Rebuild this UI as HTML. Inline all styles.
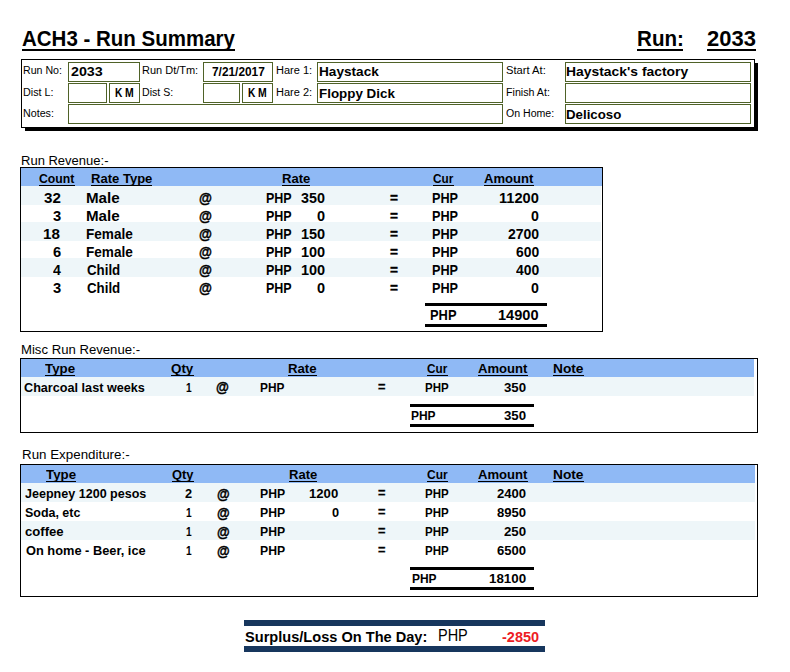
<!DOCTYPE html>
<html><head><meta charset="utf-8"><title>ACH3 - Run Summary</title>
<style>
html,body{margin:0;padding:0;background:#fff;}
body{width:790px;height:672px;position:relative;overflow:hidden;font-family:"Liberation Sans",sans-serif;}
.r{position:absolute;box-sizing:content-box;}
.t{position:absolute;white-space:pre;font-weight:700;color:#000;transform-origin:0 0;font-family:"Liberation Sans",sans-serif;}
</style></head><body>
<div class="r" style="left:22px;top:49px;width:213px;height:2px;background:#000;"></div>
<div class="r" style="left:637px;top:49px;width:46px;height:2px;background:#000;"></div>
<div class="r" style="left:707px;top:49px;width:49px;height:2px;background:#000;"></div>
<div class="r" style="left:25px;top:128px;width:733px;height:3px;background:#000;"></div>
<div class="r" style="left:755px;top:63px;width:3px;height:68px;background:#000;"></div>
<div class="r" style="left:21px;top:59px;width:732px;height:67px;border:1px solid #000;background:#fff;"></div>
<div class="r" style="left:68px;top:62px;width:70px;height:18px;border:1px solid #4f6228;background:#fff;"></div>
<div class="r" style="left:68px;top:83px;width:37px;height:18px;border:1px solid #4f6228;background:#fff;"></div>
<div class="r" style="left:109px;top:83px;width:29px;height:18px;border:1px solid #4f6228;background:#fff;"></div>
<div class="r" style="left:68px;top:104px;width:433px;height:18px;border:1px solid #4f6228;background:#fff;"></div>
<div class="r" style="left:203px;top:62px;width:68px;height:18px;border:1px solid #4f6228;background:#fff;"></div>
<div class="r" style="left:203px;top:83px;width:35px;height:18px;border:1px solid #4f6228;background:#fff;"></div>
<div class="r" style="left:242px;top:83px;width:29px;height:18px;border:1px solid #4f6228;background:#fff;"></div>
<div class="r" style="left:317px;top:62px;width:184px;height:18px;border:1px solid #4f6228;background:#fff;"></div>
<div class="r" style="left:317px;top:83px;width:184px;height:18px;border:1px solid #4f6228;background:#fff;"></div>
<div class="r" style="left:565px;top:62px;width:184px;height:18px;border:1px solid #4f6228;background:#fff;"></div>
<div class="r" style="left:565px;top:83px;width:184px;height:18px;border:1px solid #4f6228;background:#fff;"></div>
<div class="r" style="left:565px;top:104px;width:184px;height:18px;border:1px solid #4f6228;background:#fff;"></div>
<div class="r" style="left:20px;top:167px;width:581px;height:163px;border:1px solid #000;background:#fff;"></div>
<div class="r" style="left:21px;top:168px;width:581px;height:18px;background:#8fb9f5;"></div>
<div class="r" style="left:21px;top:186px;width:580px;height:19px;background:#eef6f9;"></div>
<div class="r" style="left:21px;top:222px;width:580px;height:19px;background:#eef6f9;"></div>
<div class="r" style="left:21px;top:258px;width:580px;height:19px;background:#eef6f9;"></div>
<div class="r" style="left:38.7px;top:184.5px;width:36.199999999999996px;height:1px;background:#000;"></div>
<div class="r" style="left:90.7px;top:184.5px;width:61.6px;height:1px;background:#000;"></div>
<div class="r" style="left:281.7px;top:184.5px;width:28.6px;height:1px;background:#000;"></div>
<div class="r" style="left:432.7px;top:184.5px;width:21.200000000000024px;height:1px;background:#000;"></div>
<div class="r" style="left:483.7px;top:184.5px;width:50.200000000000024px;height:1px;background:#000;"></div>
<div class="r" style="left:425px;top:303px;width:122px;height:3px;background:#000;"></div>
<div class="r" style="left:425px;top:324px;width:122px;height:3px;background:#000;"></div>
<div class="r" style="left:20px;top:358px;width:736px;height:73px;border:1px solid #000;background:#fff;"></div>
<div class="r" style="left:21px;top:359px;width:733px;height:18px;background:#8fb9f5;"></div>
<div class="r" style="left:21px;top:377px;width:733px;height:19px;background:#eef6f9;"></div>
<div class="r" style="left:44.7px;top:374.5px;width:30.6px;height:1px;background:#000;"></div>
<div class="r" style="left:170.7px;top:374.5px;width:23.000000000000007px;height:1px;background:#000;"></div>
<div class="r" style="left:287.7px;top:374.5px;width:28.99999999999998px;height:1px;background:#000;"></div>
<div class="r" style="left:426.7px;top:374.5px;width:21.200000000000024px;height:1px;background:#000;"></div>
<div class="r" style="left:477.7px;top:374.5px;width:50.200000000000024px;height:1px;background:#000;"></div>
<div class="r" style="left:553.0px;top:374.5px;width:30.700000000000024px;height:1px;background:#000;"></div>
<div class="r" style="left:410px;top:404px;width:124px;height:3px;background:#000;"></div>
<div class="r" style="left:410px;top:424px;width:124px;height:3px;background:#000;"></div>
<div class="r" style="left:20px;top:464px;width:736px;height:131px;border:1px solid #000;background:#fff;"></div>
<div class="r" style="left:21px;top:465px;width:734px;height:18px;background:#8fb9f5;"></div>
<div class="r" style="left:21px;top:483px;width:734px;height:19px;background:#eef6f9;"></div>
<div class="r" style="left:21px;top:521px;width:734px;height:19px;background:#eef6f9;"></div>
<div class="r" style="left:45.7px;top:480.5px;width:30.6px;height:1px;background:#000;"></div>
<div class="r" style="left:171.7px;top:480.5px;width:22.199999999999996px;height:1px;background:#000;"></div>
<div class="r" style="left:288.7px;top:480.5px;width:28.6px;height:1px;background:#000;"></div>
<div class="r" style="left:426.7px;top:480.5px;width:21.6px;height:1px;background:#000;"></div>
<div class="r" style="left:477.7px;top:480.5px;width:50.200000000000024px;height:1px;background:#000;"></div>
<div class="r" style="left:553.0px;top:480.5px;width:30.700000000000024px;height:1px;background:#000;"></div>
<div class="r" style="left:410px;top:567px;width:124px;height:3px;background:#000;"></div>
<div class="r" style="left:410px;top:587px;width:124px;height:3px;background:#000;"></div>
<div class="r" style="left:244px;top:620px;width:301px;height:5.6px;background:#17365d;"></div>
<div class="r" style="left:244px;top:646px;width:301px;height:5.6px;background:#17365d;"></div>
<span class="t" style="left:21.77px;top:26px;font-size:21.66px;line-height:25px;transform:scaleX(0.9461);">ACH3 - Run Summary</span>
<span class="t" style="left:637.29px;top:26px;font-size:21.66px;line-height:25px;transform:scaleX(0.9514);">Run:</span>
<span class="t" style="left:707.19px;top:26px;font-size:21.66px;line-height:25px;transform:scaleX(1.0139);">2033</span>
<span class="t" style="left:23.41px;top:63px;font-size:11.63px;line-height:13px;transform:scaleX(0.9132);font-weight:400;">Run No:</span>
<span class="t" style="left:23.42px;top:85px;font-size:11.63px;line-height:13px;transform:scaleX(0.9253);font-weight:400;">Dist L:</span>
<span class="t" style="left:23.41px;top:106px;font-size:11.63px;line-height:13px;transform:scaleX(0.9208);font-weight:400;">Notes:</span>
<span class="t" style="left:142.34px;top:63px;font-size:11.63px;line-height:13px;transform:scaleX(0.9453);font-weight:400;">Run Dt/Tm:</span>
<span class="t" style="left:142.49px;top:85px;font-size:11.63px;line-height:13px;transform:scaleX(0.9095);font-weight:400;">Dist S:</span>
<span class="t" style="left:276.35px;top:63px;font-size:11.63px;line-height:13px;transform:scaleX(0.9464);font-weight:400;">Hare 1:</span>
<span class="t" style="left:276.35px;top:85px;font-size:11.63px;line-height:13px;transform:scaleX(0.9464);font-weight:400;">Hare 2:</span>
<span class="t" style="left:505.82px;top:63px;font-size:11.63px;line-height:13px;transform:scaleX(0.9624);font-weight:400;">Start At:</span>
<span class="t" style="left:506.14px;top:85px;font-size:11.63px;line-height:13px;transform:scaleX(0.9189);font-weight:400;">Finish At:</span>
<span class="t" style="left:506.22px;top:106px;font-size:11.63px;line-height:13px;transform:scaleX(0.9097);font-weight:400;">On Home:</span>
<span class="t" style="left:71.00px;top:64px;font-size:13.37px;line-height:15px;transform:scaleX(1.0680);">2033</span>
<span class="t" style="left:319.38px;top:64px;font-size:13.37px;line-height:15px;transform:scaleX(1.0199);">Haystack</span>
<span class="t" style="left:319.34px;top:86px;font-size:13.37px;line-height:15px;transform:scaleX(1.0017);">Floppy Dick</span>
<span class="t" style="left:566.01px;top:64px;font-size:13.37px;line-height:15px;transform:scaleX(1.0395);">Haystack's factory</span>
<span class="t" style="left:566.14px;top:107px;font-size:13.37px;line-height:15px;transform:scaleX(0.9924);">Delicoso</span>
<span class="t" style="left:211.60px;top:65px;font-size:12.20px;line-height:14px;transform:scaleX(0.9735);">7/21/2017</span>
<span class="t" style="left:115.28px;top:86px;font-size:12.00px;line-height:14px;transform:scaleX(0.8469);">K</span>
<span class="t" style="left:124.90px;top:86px;font-size:12.00px;line-height:14px;transform:scaleX(0.8700);">M</span>
<span class="t" style="left:248.28px;top:86px;font-size:12.00px;line-height:14px;transform:scaleX(0.8469);">K</span>
<span class="t" style="left:257.90px;top:86px;font-size:12.00px;line-height:14px;transform:scaleX(0.8700);">M</span>
<span class="t" style="left:21.21px;top:154px;font-size:11.92px;line-height:14px;transform:scaleX(1.0924);font-weight:400;">Run Revenue:-</span>
<span class="t" style="left:20.77px;top:343px;font-size:11.92px;line-height:14px;transform:scaleX(1.1035);font-weight:400;">Misc Run Revenue:-</span>
<span class="t" style="left:22.21px;top:448px;font-size:11.92px;line-height:14px;transform:scaleX(1.1214);font-weight:400;">Run Expenditure:-</span>
<span class="t" style="left:39.00px;top:171px;font-size:13.37px;line-height:15px;transform:scaleX(0.9162);">Count</span>
<span class="t" style="left:90.69px;top:171px;font-size:13.37px;line-height:15px;transform:scaleX(0.9764);">Rate Type</span>
<span class="t" style="left:281.69px;top:171px;font-size:13.37px;line-height:15px;transform:scaleX(0.9799);">Rate</span>
<span class="t" style="left:433.00px;top:171px;font-size:13.37px;line-height:15px;transform:scaleX(0.8804);">Cur</span>
<span class="t" style="left:484.00px;top:171px;font-size:13.37px;line-height:15px;transform:scaleX(0.9773);">Amount</span>
<span class="t" style="left:44.14px;top:190px;font-size:13.95px;line-height:16px;transform:scaleX(1.0859);">32</span>
<span class="t" style="left:85.88px;top:190px;font-size:13.95px;line-height:16px;transform:scaleX(1.0874);">Male</span>
<span class="t" style="left:198.74px;top:190px;font-size:14.65px;line-height:16px;transform:scaleX(0.9054);-webkit-text-stroke:0.45px #000;">@</span>
<span class="t" style="left:265.61px;top:190px;font-size:13.95px;line-height:16px;transform:scaleX(0.8971);">PHP</span>
<span class="t" style="left:301.30px;top:190px;font-size:13.95px;line-height:16px;transform:scaleX(1.0277);">350</span>
<span class="t" style="left:390.00px;top:190px;font-size:13.95px;line-height:16px;transform:scaleX(0.9801);-webkit-text-stroke:0.3px #000;">=</span>
<span class="t" style="left:432.20px;top:190px;font-size:13.95px;line-height:16px;transform:scaleX(0.9097);">PHP</span>
<span class="t" style="left:499.24px;top:190px;font-size:13.95px;line-height:16px;transform:scaleX(1.0484);">11200</span>
<span class="t" style="left:52.59px;top:208px;font-size:13.95px;line-height:16px;transform:scaleX(1.0574);">3</span>
<span class="t" style="left:85.88px;top:208px;font-size:13.95px;line-height:16px;transform:scaleX(1.0874);">Male</span>
<span class="t" style="left:198.74px;top:208px;font-size:14.65px;line-height:16px;transform:scaleX(0.9054);-webkit-text-stroke:0.45px #000;">@</span>
<span class="t" style="left:265.61px;top:208px;font-size:13.95px;line-height:16px;transform:scaleX(0.8971);">PHP</span>
<span class="t" style="left:316.96px;top:208px;font-size:13.95px;line-height:16px;transform:scaleX(1.0397);">0</span>
<span class="t" style="left:390.00px;top:208px;font-size:13.95px;line-height:16px;transform:scaleX(0.9801);-webkit-text-stroke:0.3px #000;">=</span>
<span class="t" style="left:432.20px;top:208px;font-size:13.95px;line-height:16px;transform:scaleX(0.9097);">PHP</span>
<span class="t" style="left:531.09px;top:208px;font-size:13.95px;line-height:16px;transform:scaleX(1.0151);">0</span>
<span class="t" style="left:43.26px;top:226px;font-size:13.95px;line-height:16px;transform:scaleX(1.0896);">18</span>
<span class="t" style="left:85.94px;top:226px;font-size:13.95px;line-height:16px;transform:scaleX(0.9748);">Female</span>
<span class="t" style="left:198.74px;top:226px;font-size:14.65px;line-height:16px;transform:scaleX(0.9054);-webkit-text-stroke:0.45px #000;">@</span>
<span class="t" style="left:265.61px;top:226px;font-size:13.95px;line-height:16px;transform:scaleX(0.8971);">PHP</span>
<span class="t" style="left:301.02px;top:226px;font-size:13.95px;line-height:16px;transform:scaleX(1.0392);">150</span>
<span class="t" style="left:390.00px;top:226px;font-size:13.95px;line-height:16px;transform:scaleX(0.9801);-webkit-text-stroke:0.3px #000;">=</span>
<span class="t" style="left:432.20px;top:226px;font-size:13.95px;line-height:16px;transform:scaleX(0.9097);">PHP</span>
<span class="t" style="left:507.60px;top:226px;font-size:13.95px;line-height:16px;transform:scaleX(1.0047);">2700</span>
<span class="t" style="left:52.64px;top:244px;font-size:13.95px;line-height:16px;transform:scaleX(1.0512);">6</span>
<span class="t" style="left:85.94px;top:244px;font-size:13.95px;line-height:16px;transform:scaleX(0.9748);">Female</span>
<span class="t" style="left:198.74px;top:244px;font-size:14.65px;line-height:16px;transform:scaleX(0.9054);-webkit-text-stroke:0.45px #000;">@</span>
<span class="t" style="left:265.61px;top:244px;font-size:13.95px;line-height:16px;transform:scaleX(0.8971);">PHP</span>
<span class="t" style="left:301.02px;top:244px;font-size:13.95px;line-height:16px;transform:scaleX(1.0392);">100</span>
<span class="t" style="left:390.00px;top:244px;font-size:13.95px;line-height:16px;transform:scaleX(0.9801);-webkit-text-stroke:0.3px #000;">=</span>
<span class="t" style="left:432.20px;top:244px;font-size:13.95px;line-height:16px;transform:scaleX(0.9097);">PHP</span>
<span class="t" style="left:515.60px;top:244px;font-size:13.95px;line-height:16px;transform:scaleX(0.9956);">600</span>
<span class="t" style="left:52.64px;top:262px;font-size:13.95px;line-height:16px;transform:scaleX(1.0124);">4</span>
<span class="t" style="left:86.73px;top:262px;font-size:13.95px;line-height:16px;transform:scaleX(0.9535);">Child</span>
<span class="t" style="left:198.74px;top:262px;font-size:14.65px;line-height:16px;transform:scaleX(0.9054);-webkit-text-stroke:0.45px #000;">@</span>
<span class="t" style="left:265.61px;top:262px;font-size:13.95px;line-height:16px;transform:scaleX(0.8971);">PHP</span>
<span class="t" style="left:301.02px;top:262px;font-size:13.95px;line-height:16px;transform:scaleX(1.0392);">100</span>
<span class="t" style="left:390.00px;top:262px;font-size:13.95px;line-height:16px;transform:scaleX(0.9801);-webkit-text-stroke:0.3px #000;">=</span>
<span class="t" style="left:432.20px;top:262px;font-size:13.95px;line-height:16px;transform:scaleX(0.9097);">PHP</span>
<span class="t" style="left:515.60px;top:262px;font-size:13.95px;line-height:16px;transform:scaleX(0.9956);">400</span>
<span class="t" style="left:52.59px;top:280px;font-size:13.95px;line-height:16px;transform:scaleX(1.0574);">3</span>
<span class="t" style="left:86.73px;top:280px;font-size:13.95px;line-height:16px;transform:scaleX(0.9535);">Child</span>
<span class="t" style="left:198.74px;top:280px;font-size:14.65px;line-height:16px;transform:scaleX(0.9054);-webkit-text-stroke:0.45px #000;">@</span>
<span class="t" style="left:265.61px;top:280px;font-size:13.95px;line-height:16px;transform:scaleX(0.8971);">PHP</span>
<span class="t" style="left:316.96px;top:280px;font-size:13.95px;line-height:16px;transform:scaleX(1.0397);">0</span>
<span class="t" style="left:390.00px;top:280px;font-size:13.95px;line-height:16px;transform:scaleX(0.9801);-webkit-text-stroke:0.3px #000;">=</span>
<span class="t" style="left:432.20px;top:280px;font-size:13.95px;line-height:16px;transform:scaleX(0.9097);">PHP</span>
<span class="t" style="left:531.09px;top:280px;font-size:13.95px;line-height:16px;transform:scaleX(1.0151);">0</span>
<span class="t" style="left:430.14px;top:307px;font-size:13.95px;line-height:16px;transform:scaleX(0.9237);">PHP</span>
<span class="t" style="left:498.24px;top:307px;font-size:13.95px;line-height:16px;transform:scaleX(1.0457);">14900</span>
<span class="t" style="left:45.00px;top:361px;font-size:13.52px;line-height:15px;transform:scaleX(0.9836);">Type</span>
<span class="t" style="left:171.00px;top:361px;font-size:13.52px;line-height:15px;transform:scaleX(0.9880);">Qty</span>
<span class="t" style="left:287.69px;top:361px;font-size:13.52px;line-height:15px;transform:scaleX(0.9763);">Rate</span>
<span class="t" style="left:427.00px;top:361px;font-size:13.52px;line-height:15px;transform:scaleX(0.8690);">Cur</span>
<span class="t" style="left:478.00px;top:361px;font-size:13.52px;line-height:15px;transform:scaleX(0.9686);">Amount</span>
<span class="t" style="left:552.86px;top:361px;font-size:13.00px;line-height:15px;transform:scaleX(1.0556);">Note</span>
<span class="t" style="left:24.40px;top:380px;font-size:13.52px;line-height:15px;transform:scaleX(0.9350);">Charcoal last weeks</span>
<span class="t" style="left:185.60px;top:380px;font-size:13.52px;line-height:15px;transform:scaleX(0.7500);">1</span>
<span class="t" style="left:215.60px;top:379px;font-size:14.19px;line-height:16px;transform:scaleX(0.9286);-webkit-text-stroke:0.45px #000;">@</span>
<span class="t" style="left:259.85px;top:380px;font-size:13.52px;line-height:15px;transform:scaleX(0.8789);">PHP</span>
<span class="t" style="left:378.00px;top:379px;font-size:13.52px;line-height:15px;transform:scaleX(0.9437);-webkit-text-stroke:0.3px #000;">=</span>
<span class="t" style="left:425.10px;top:380px;font-size:13.52px;line-height:15px;transform:scaleX(0.8506);">PHP</span>
<span class="t" style="left:504.40px;top:380px;font-size:13.52px;line-height:15px;transform:scaleX(0.9811);">350</span>
<span class="t" style="left:410.95px;top:408px;font-size:13.52px;line-height:15px;transform:scaleX(0.8853);">PHP</span>
<span class="t" style="left:504.40px;top:408px;font-size:13.52px;line-height:15px;transform:scaleX(0.9811);">350</span>
<span class="t" style="left:46.00px;top:467px;font-size:13.52px;line-height:15px;transform:scaleX(0.9836);">Type</span>
<span class="t" style="left:172.00px;top:467px;font-size:13.52px;line-height:15px;transform:scaleX(0.9516);">Qty</span>
<span class="t" style="left:288.69px;top:467px;font-size:13.52px;line-height:15px;transform:scaleX(0.9642);">Rate</span>
<span class="t" style="left:427.00px;top:467px;font-size:13.52px;line-height:15px;transform:scaleX(0.8854);">Cur</span>
<span class="t" style="left:478.00px;top:467px;font-size:13.52px;line-height:15px;transform:scaleX(0.9686);">Amount</span>
<span class="t" style="left:552.86px;top:467px;font-size:13.00px;line-height:15px;transform:scaleX(1.0556);">Note</span>
<span class="t" style="left:25.00px;top:486px;font-size:13.52px;line-height:15px;transform:scaleX(0.9282);">Jeepney 1200 pesos</span>
<span class="t" style="left:185.40px;top:486px;font-size:13.52px;line-height:15px;transform:scaleX(0.9429);">2</span>
<span class="t" style="left:216.60px;top:486px;font-size:14.19px;line-height:16px;transform:scaleX(0.9143);-webkit-text-stroke:0.45px #000;">@</span>
<span class="t" style="left:260.17px;top:486px;font-size:13.52px;line-height:15px;transform:scaleX(0.9045);">PHP</span>
<span class="t" style="left:309.03px;top:486px;font-size:13.52px;line-height:15px;transform:scaleX(0.9728);">1200</span>
<span class="t" style="left:378.00px;top:485px;font-size:13.52px;line-height:15px;transform:scaleX(0.9437);-webkit-text-stroke:0.3px #000;">=</span>
<span class="t" style="left:425.10px;top:486px;font-size:13.52px;line-height:15px;transform:scaleX(0.8506);">PHP</span>
<span class="t" style="left:497.40px;top:486px;font-size:13.52px;line-height:15px;transform:scaleX(0.9687);">2400</span>
<span class="t" style="left:24.79px;top:505px;font-size:13.52px;line-height:15px;transform:scaleX(0.9214);">Soda, etc</span>
<span class="t" style="left:185.60px;top:505px;font-size:13.52px;line-height:15px;transform:scaleX(0.7500);">1</span>
<span class="t" style="left:216.60px;top:505px;font-size:14.19px;line-height:16px;transform:scaleX(0.9143);-webkit-text-stroke:0.45px #000;">@</span>
<span class="t" style="left:260.17px;top:505px;font-size:13.52px;line-height:15px;transform:scaleX(0.9045);">PHP</span>
<span class="t" style="left:332.40px;top:505px;font-size:13.52px;line-height:15px;transform:scaleX(0.9429);">0</span>
<span class="t" style="left:378.00px;top:504px;font-size:13.52px;line-height:15px;transform:scaleX(0.9437);-webkit-text-stroke:0.3px #000;">=</span>
<span class="t" style="left:425.10px;top:505px;font-size:13.52px;line-height:15px;transform:scaleX(0.8506);">PHP</span>
<span class="t" style="left:497.40px;top:505px;font-size:13.52px;line-height:15px;transform:scaleX(0.9687);">8950</span>
<span class="t" style="left:25.00px;top:524px;font-size:13.52px;line-height:15px;transform:scaleX(0.9708);">coffee</span>
<span class="t" style="left:185.60px;top:524px;font-size:13.52px;line-height:15px;transform:scaleX(0.7500);">1</span>
<span class="t" style="left:216.60px;top:524px;font-size:14.19px;line-height:16px;transform:scaleX(0.9143);-webkit-text-stroke:0.45px #000;">@</span>
<span class="t" style="left:260.17px;top:524px;font-size:13.52px;line-height:15px;transform:scaleX(0.9045);">PHP</span>
<span class="t" style="left:378.00px;top:523px;font-size:13.52px;line-height:15px;transform:scaleX(0.9437);-webkit-text-stroke:0.3px #000;">=</span>
<span class="t" style="left:425.10px;top:524px;font-size:13.52px;line-height:15px;transform:scaleX(0.8506);">PHP</span>
<span class="t" style="left:504.40px;top:524px;font-size:13.52px;line-height:15px;transform:scaleX(0.9811);">250</span>
<span class="t" style="left:25.60px;top:543px;font-size:13.52px;line-height:15px;transform:scaleX(0.9484);">On home - Beer, ice</span>
<span class="t" style="left:185.60px;top:543px;font-size:13.52px;line-height:15px;transform:scaleX(0.7500);">1</span>
<span class="t" style="left:216.60px;top:543px;font-size:14.19px;line-height:16px;transform:scaleX(0.9143);-webkit-text-stroke:0.45px #000;">@</span>
<span class="t" style="left:260.17px;top:543px;font-size:13.52px;line-height:15px;transform:scaleX(0.9045);">PHP</span>
<span class="t" style="left:378.00px;top:542px;font-size:13.52px;line-height:15px;transform:scaleX(0.9437);-webkit-text-stroke:0.3px #000;">=</span>
<span class="t" style="left:425.10px;top:543px;font-size:13.52px;line-height:15px;transform:scaleX(0.8506);">PHP</span>
<span class="t" style="left:497.40px;top:543px;font-size:13.52px;line-height:15px;transform:scaleX(0.9687);">6500</span>
<span class="t" style="left:411.95px;top:571px;font-size:13.52px;line-height:15px;transform:scaleX(0.8853);">PHP</span>
<span class="t" style="left:489.40px;top:571px;font-size:13.52px;line-height:15px;transform:scaleX(0.9883);">18100</span>
<span class="t" style="left:245.47px;top:628px;font-size:15.20px;line-height:17px;transform:scaleX(0.9602);">Surplus/Loss On The Day:</span>
<span class="t" style="left:437.86px;top:627px;font-size:15.80px;line-height:17px;transform:scaleX(0.9168);font-weight:400;">PHP</span>
<span class="t" style="left:501.90px;top:628px;font-size:15.20px;line-height:17px;transform:scaleX(0.9536);color:#ed1c24;">-2850</span>
</body></html>
